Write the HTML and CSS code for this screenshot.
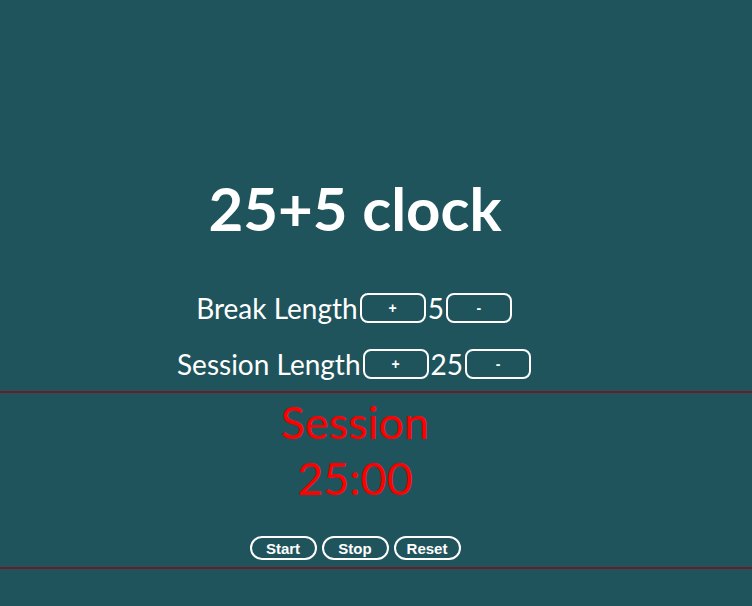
FILE: index.html
```html
<!DOCTYPE html>
<html>
<head>
<meta charset="utf-8">
<link rel="stylesheet" href="styles.css">
</head>
<body>
<div class="app">
  <h1 class="title">25+5 clock</h1>
  <div class="controls">
    <div class="row">
      <span class="label">Break Length</span>
      <button class="adj">+</button>
      <span class="val">5</span>
      <button class="adj">-</button>
    </div>
    <div class="row">
      <span class="label">Session Length</span>
      <button class="adj">+</button>
      <span class="val">25</span>
      <button class="adj">-</button>
    </div>
  </div>
</div>
<div class="timer">
  <div class="timer-inner">
    <div class="timer-label">Session</div>
    <div class="timer-time">25:00</div>
    <div class="actions">
      <button class="act">Start</button>
      <button class="act">Stop</button>
      <button class="act">Reset</button>
    </div>
  </div>
</div>
</body>
</html>
```
FILE: styles.css
```css
html, body {
  margin: 0;
  padding: 0;
}
body {
  background: #1f545c;
  min-height: 606px;
  font-family: "Lato", "Open Sans", sans-serif;
  color: #ffffff;
}
.app {
  padding-right: 42px;
  padding-top: 172px;
  display: flex;
  flex-direction: column;
  align-items: center;
}
.title {
  margin: 0;
  font-size: 60px;
  line-height: 72px;
  font-weight: 700;
}
.controls {
  margin-top: 46px;
  display: flex;
  flex-direction: column;
  align-items: center;
  gap: 20px;
}
.row {
  display: flex;
  align-items: center;
  height: 36px;
}
.label, .val {
  font-size: 28px;
  line-height: 36px;
}
.adj {
  width: 66px;
  height: 30px;
  margin: 0 2px;
  background: transparent;
  border: 2px solid #ffffff;
  border-radius: 8px;
  color: #ffffff;
  font-family: "Liberation Sans", Arial, sans-serif;
  font-weight: 700;
  font-size: 14px;
  padding: 0;
}
.timer {
  margin-top: 9px;
  border-top: 2px solid #6b1e22;
  border-bottom: 2px solid #6b1e22;
  height: 174px;
}
.timer-inner {
  padding-right: 42px;
  display: flex;
  flex-direction: column;
  align-items: center;
}
.timer-label, .timer-time {
  color: #ff0000;
  font-size: 45px;
  line-height: 56px;
}
.timer-label {
  margin-top: 1px;
}
.actions {
  margin-top: 30px;
  display: flex;
  gap: 5px;
}
.act {
  width: 67px;
  height: 24px;
  background: transparent;
  border: 2px solid #ffffff;
  border-radius: 12px;
  color: #ffffff;
  font-family: "Liberation Sans", Arial, sans-serif;
  font-weight: 700;
  font-size: 15px;
  line-height: 17px;
  padding: 0;
}
```
